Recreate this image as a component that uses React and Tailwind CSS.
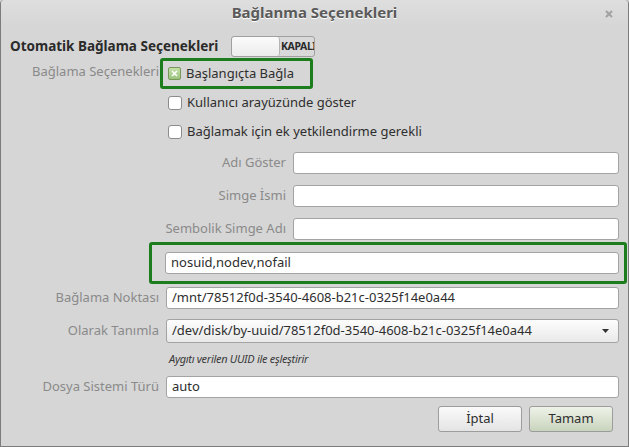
import { useState } from "react";

const font = { fontFamily: '"Noto Sans", "DejaVu Sans", sans-serif' };

const Field = ({ value = "", className = "" }) => (
  <div
    className={`flex h-[22px] items-center rounded-[3px] border border-[#a3a3a3] bg-white px-[5px] text-[13px] text-[#2e2e2e] ${className}`}
  >
    {value}
  </div>
);

const Check = ({ checked, label }) => (
  <div className="flex items-center">
    {checked ? (
      <span className="flex h-[13px] w-[13px] items-center justify-center rounded-[2px] border border-[#78985a] bg-[linear-gradient(#c4e0a8,#9cc47c)]">
        <svg width="7" height="7" viewBox="0 0 7 7">
          <path d="M1 1L6 6M6 1L1 6" stroke="#fff" strokeWidth="1.6" />
        </svg>
      </span>
    ) : (
      <span className="h-[14px] w-[14px] rounded-[3px] border border-[#8c8c8c] bg-white" />
    )}
    <span className="ml-[5px] text-[13px] text-[#2e2e2e]">{label}</span>
  </div>
);

const LabelRow = ({ label, value, wide }) => (
  <div className="flex items-center">
    <div className={`${wide ? "w-[285px]" : "w-[158px]"} text-right text-[13px] text-[#8a8a8a]`}>{label}</div>
    <Field value={value} className={wide ? "ml-[7px] w-[326px]" : "ml-[7px] w-[453px]"} />
  </div>
);

export default function App() {
  const [auto] = useState(false);

  return (
    <div style={font} className="h-[447px] w-[629px] bg-[#d6d6d6]">
      <div className="flex h-[447px] flex-col rounded-t-[4px] border-x border-b border-[#7c7c7c] bg-[#d6d6d6]">
        {/* title bar */}
        <div className="relative flex h-[27px] items-center justify-center rounded-t-[4px] bg-[linear-gradient(#dedede,#d6d6d6)]">
          <span className="-mt-[2px] text-[15px] font-bold text-[#5a5a5a] [text-shadow:0_1px_0_#fff]">Bağlanma Seçenekleri</span>
          <svg className="absolute right-[15px] top-[10px]" width="8" height="8" viewBox="0 0 8 8">
            <path d="M1 1L7 7M7 1L1 7" stroke="#a2a2a2" strokeWidth="2" />
          </svg>
        </div>

        {/* auto mount switch */}
        <div className="mt-[9px] flex h-[21px] items-center">
          <span className="ml-[9px] w-[221px] text-[13.5px] font-bold text-[#2a2a2a]">Otomatik Bağlama Seçenekleri</span>
          <div className="flex h-[21px] w-[84px] overflow-hidden rounded-[3px] border border-[#a0a0a0] bg-[#d9d9d9]">
            <div className="h-full w-[48px] shrink-0 rounded-[3px] border-r border-[#b4b4b4] bg-[linear-gradient(#fbfbfb,#ececec)]" />
            <span className="ml-[1px] shrink-0 text-[10.5px] font-bold leading-[19px] tracking-[-0.4px] text-[#2a2a2a]">{auto ? "AÇIK" : "KAPALI"}</span>
          </div>
        </div>

        {/* mount options */}
        <div className="mt-[1px] flex items-start">
          <div className="mt-[4px] w-[158px] text-right text-[13px] text-[#8a8a8a]">Bağlama Seçenekleri</div>
          <div className="ml-[1px] flex h-[31px] w-[153px] items-center rounded-[3px] border-[3px] border-[#1c7d1c] pl-[5px]">
            <Check checked label="Başlangıçta Bağla" />
          </div>
        </div>
        <div className="ml-[167px] mt-[5px] flex h-[18px] items-center">
          <Check label="Kullanıcı arayüzünde göster" />
        </div>
        <div className="ml-[167px] mt-[11px] flex h-[18px] items-center">
          <Check label="Bağlamak için ek yetkilendirme gerekli" />
        </div>

        <div className="mt-[11px] flex flex-col gap-[11px]">
          <LabelRow label="Adı Göster" wide />
          <LabelRow label="Simge İsmi" wide />
          <LabelRow label="Sembolik Simge Adı" wide />
        </div>

        {/* custom options */}
        <div className="ml-[148px] mt-[2px] flex h-[42px] w-[478px] items-center rounded-[3px] border-[3px] border-[#1c7d1c] pl-[13px]">
          <Field value="nosuid,nodev,nofail" className="w-[454px]" />
        </div>

        <div className="mt-[3px]">
          <LabelRow label="Bağlama Noktası" value="/mnt/78512f0d-3540-4608-b21c-0325f14e0a44" />
        </div>

        <div className="mt-[10px] flex items-center">
          <div className="w-[158px] text-right text-[13px] text-[#8a8a8a]">Olarak Tanımla</div>
          <div className="ml-[7px] flex h-[24px] w-[453px] items-center justify-between rounded-[3px] border border-[#a3a3a3] bg-[linear-gradient(#fdfdfd,#e9e9e9)] px-[5px] text-[13px] text-[#2e2e2e]">
            <span>/dev/disk/by-uuid/78512f0d-3540-4608-b21c-0325f14e0a44</span>
            <svg className="mr-[4px]" width="7" height="4" viewBox="0 0 7 4">
              <path d="M0 0H7L3.5 4Z" fill="#333" />
            </svg>
          </div>
        </div>

        <div className="ml-[168px] mt-[8px] text-[11px] italic tracking-[-0.3px] text-[#3a3a3a]">Aygıtı verilen UUID ile eşleştirir</div>

        <div className="mt-[8px]">
          <LabelRow label="Dosya Sistemi Türü" value="auto" />
        </div>

        <div className="mr-[15px] mt-[8px] flex justify-end gap-[7px]">
          <button className="h-[26px] w-[84px] rounded-[3px] border border-[#9c9c9c] bg-[linear-gradient(#fafafa,#e4e4e4)] text-[13px] text-[#2e2e2e]">
            İptal
          </button>
          <button className="h-[26px] w-[84px] rounded-[3px] border border-[#9c9c9c] bg-[linear-gradient(#eef2e8,#c9d4bd)] text-[13px] text-[#2e2e2e]">
            Tamam
          </button>
        </div>
      </div>
    </div>
  );
}
